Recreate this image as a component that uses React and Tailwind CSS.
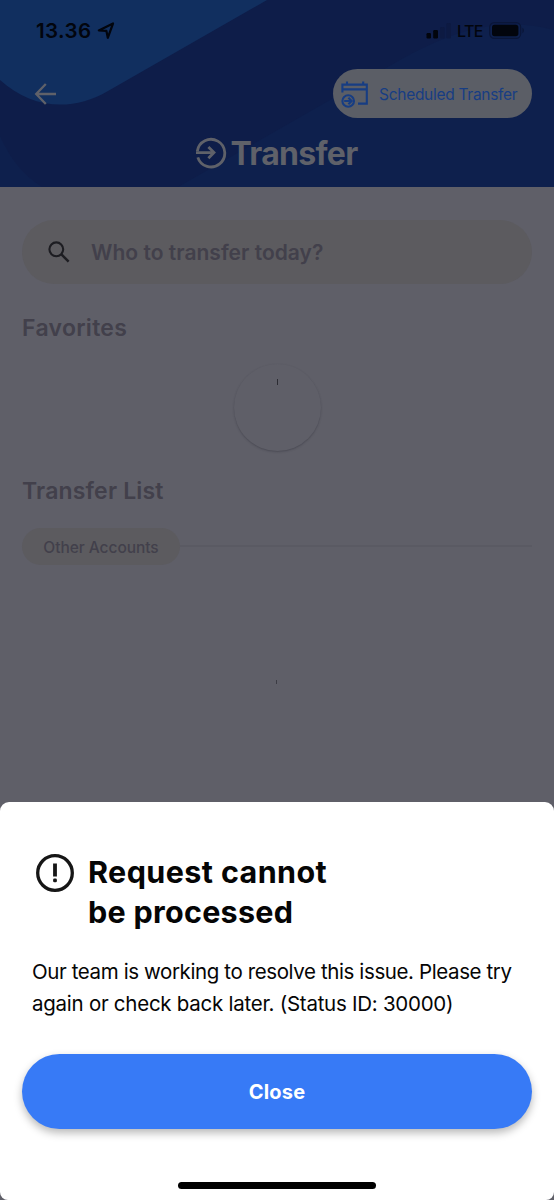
import React from 'react';

// --- ICONS ---
const LocationArrow = () => (
  <svg width="18" height="18" viewBox="0 0 18 18" fill="none" className="ml-[5px]">
    <path d="M16 1.5L10.8 15.8L9.4 8.9L1.8 8.4Z" stroke="#02050d" strokeWidth="2.2" strokeLinejoin="round" />
  </svg>
);

const SignalBars = () => (
  <svg width="26" height="16" viewBox="0 0 26 16">
    <rect x="1.5" y="10" width="4.5" height="5.5" rx="1.2" fill="#02050d" />
    <rect x="8.2" y="7" width="4.8" height="8.5" rx="1.2" fill="#02050d" />
    <rect x="15" y="4" width="4.6" height="11.5" rx="1.2" fill="#0d1a42" />
    <rect x="21.4" y="0" width="4.6" height="15.5" rx="1.2" fill="#0d1a42" />
  </svg>
);

const Battery = () => (
  <svg width="36" height="17" viewBox="0 0 36 17">
    <rect x="0.7" y="0.7" width="31" height="15.6" rx="4.6" fill="none" stroke="#0a1638" strokeWidth="1.2" />
    <rect x="3" y="2.8" width="26.4" height="11.4" rx="2.6" fill="#02050d" />
    <path d="M33.4 5.8C35.4 6.5 35.4 10.5 33.4 11.2Z" fill="#0a1638" />
  </svg>
);

const BackArrow = () => (
  <svg width="22" height="22" viewBox="0 0 22 22" fill="none" stroke="#5f6169" strokeWidth="2.3">
    <path d="M11.8 1L2.2 11L11.8 21M2.2 11H22" />
  </svg>
);

const CalendarTransfer = () => (
  <svg width="28" height="28" viewBox="0 0 28 28" fill="none" stroke="#173d83" strokeWidth="2.1">
    <path d="M1.4 12.5V4.6H25.8V23.6H17M1.4 9.4H25.8M6 1.5V4.6M22.2 1.5V4.6" />
    <circle cx="7.2" cy="21" r="5.8" />
    <path d="M3.2 21H10.4M7.4 17.7L10.7 21L7.4 24.3" />
  </svg>
);

const TransferIcon = () => (
  <svg width="32" height="32" viewBox="0 0 32 32" fill="none" stroke="#5f6169" strokeWidth="2.8" className="-mt-px">
    <path d="M2.3 14.2A13.8 13.8 0 1 1 2.8 20.3" />
    <path d="M1 15.6H19M13.4 10L19 15.6L13.4 21.2" />
  </svg>
);

const SearchIcon = () => (
  <svg width="22" height="22" viewBox="0 0 22 22" fill="none" stroke="#1d1d22" strokeWidth="2.1">
    <circle cx="8.3" cy="8.3" r="6.9" />
    <path d="M13.2 13.2L20.6 20.6" strokeWidth="2.5" />
  </svg>
);

const AlertIcon = () => (
  <svg width="38" height="38" viewBox="0 0 38 38" className="shrink-0">
    <circle cx="19" cy="19" r="17.3" fill="none" stroke="#161616" strokeWidth="3.3" />
    <rect x="17.1" y="9.5" width="3.8" height="13" fill="#161616" />
    <rect x="17.1" y="24.5" width="3.8" height="3.8" rx="1.4" fill="#161616" />
  </svg>
);

// Wave shapes behind the header
const HeaderWaves = () => (
  <svg width="554" height="187" viewBox="0 0 554 187" className="absolute inset-0">
    <path d="M178 187L400 60C454 30 500 16 554 30V187Z" fill="#0e204d" />
    <path d="M0 136C10 158 22 174 42 187H0Z" fill="#0e204d" />
    <path d="M0 0H267L108 91C72 112 32 109 0 80Z" fill="#112f5f" />
  </svg>
);

const Header = () => (
  <header className="relative h-[187px] bg-[#0e1d49]">
    <HeaderWaves />
    <div className="relative">
      <div className="flex h-[62px] items-center justify-between pl-9 pr-[29px]">
        <div className="flex items-center text-[20.5px] font-semibold text-[#02050d]">
          <span className="w-[56px] whitespace-nowrap tracking-[0.4px]">13.36</span>
          <LocationArrow />
        </div>
        <div className="flex items-center">
          <SignalBars />
          <span className="ml-[6px] w-[26px] text-[16px] font-medium tracking-[-0.6px] text-[#02050d]">LTE</span>
          <span className="-mt-px ml-[6px]"><Battery /></span>
        </div>
      </div>
      <div className="mt-[7px] flex h-[49px] items-center justify-between pl-[34px] pr-[22px]">
        <BackArrow />
        <div className="flex h-[49px] w-[199px] items-center rounded-full bg-[#5b5e66] pl-2">
          <CalendarTransfer />
          <span className="ml-[10px] mt-[2px] whitespace-nowrap text-[15.5px] tracking-[-0.28px] text-[#173d83]">Scheduled Transfer</span>
        </div>
      </div>
      <div className="mt-[15px] flex h-[40px] items-center justify-center gap-[3px] pr-px text-[#5f6169]">
        <TransferIcon />
        <h1 className="mt-[2px] whitespace-nowrap text-[32px] font-bold leading-[40px] tracking-[-0.7px]">Transfer</h1>
      </div>
    </div>
  </header>
);

const TransferPage = () => (
  <main className="px-[22px] pt-[33px] text-[#42404b]">
    <div className="flex h-[64px] items-center rounded-full bg-[#5c5b5f] pl-[26px]">
      <SearchIcon />
      <span className="ml-[21px] mt-[2px] whitespace-nowrap text-[21px] font-semibold tracking-[0.02px]">Who to transfer today?</span>
    </div>
    <h2 className="mt-[29px] text-[23px] font-semibold leading-[30px] tracking-[0.3px]">Favorites</h2>
    <div className="mx-auto mt-[21px] flex h-[87px] w-[87px] justify-center rounded-full bg-[#5f5f68] pt-[15px] shadow-[0_1px_2px_rgba(45,45,55,0.4)]">
      <div className="h-[6px] w-px bg-[#2c2c33]" />
    </div>
    <h2 className="mt-[25px] text-[23px] font-semibold leading-[30px] tracking-[0.17px]">Transfer List</h2>
    <div className="mt-[22px] flex items-center">
      <span className="flex h-[37px] w-[158px] items-center justify-center whitespace-nowrap rounded-full bg-[#5c5b5f] pt-[2px] text-[15.5px] font-medium tracking-[-0.05px]">
        Other Accounts
      </span>
      <div className="-mt-px h-[2px] flex-1 bg-[#5a5a63]" />
    </div>
    <div className="mt-[115px] flex justify-center pr-px">
      <div className="h-[4px] w-px bg-[#3c3c44]" />
    </div>
  </main>
);

const ErrorSheet = () => (
  <section className="absolute inset-x-0 bottom-0 flex h-[398px] flex-col rounded-b-[8px] rounded-t-[9px] bg-white px-[22px] pt-[50px] text-[#050505]">
    <div className="flex pl-[14px]">
      <div className="mt-[2px]"><AlertIcon /></div>
      <h2 className="ml-[14px] whitespace-nowrap text-[30.5px] font-bold leading-[40px]">
        <span className="tracking-[0.4px]">Request cannot</span><br />
        <span className="tracking-[0.28px]">be processed</span>
      </h2>
    </div>
    <p className="mt-[24px] whitespace-nowrap pl-[10px] text-[20.5px] leading-[32px]">
      <span className="tracking-[-0.39px]">Our team is working to resolve this issue. Please try</span><br />
      <span className="tracking-[-0.26px]">again or check back later. (Status ID: 30000)</span>
    </p>
    <button className="mt-[34px] h-[75px] w-full shrink-0 rounded-full bg-[#377af6] text-[20px] font-bold text-white shadow-[0_4px_8px_rgba(0,0,0,0.28)]">
      <span className="tracking-[0.2px]">Close</span>
    </button>
    <div className="mx-auto mt-[53px] h-[7px] w-[198px] shrink-0 rounded-full bg-black" />
  </section>
);

const App = () => {
  return (
    <div className="relative h-[1200px] w-[554px] overflow-hidden bg-[#5f5f68] font-['Inter','Liberation_Sans',sans-serif]">
      <Header />
      <TransferPage />
      <ErrorSheet />
    </div>
  );
};

export default App;
